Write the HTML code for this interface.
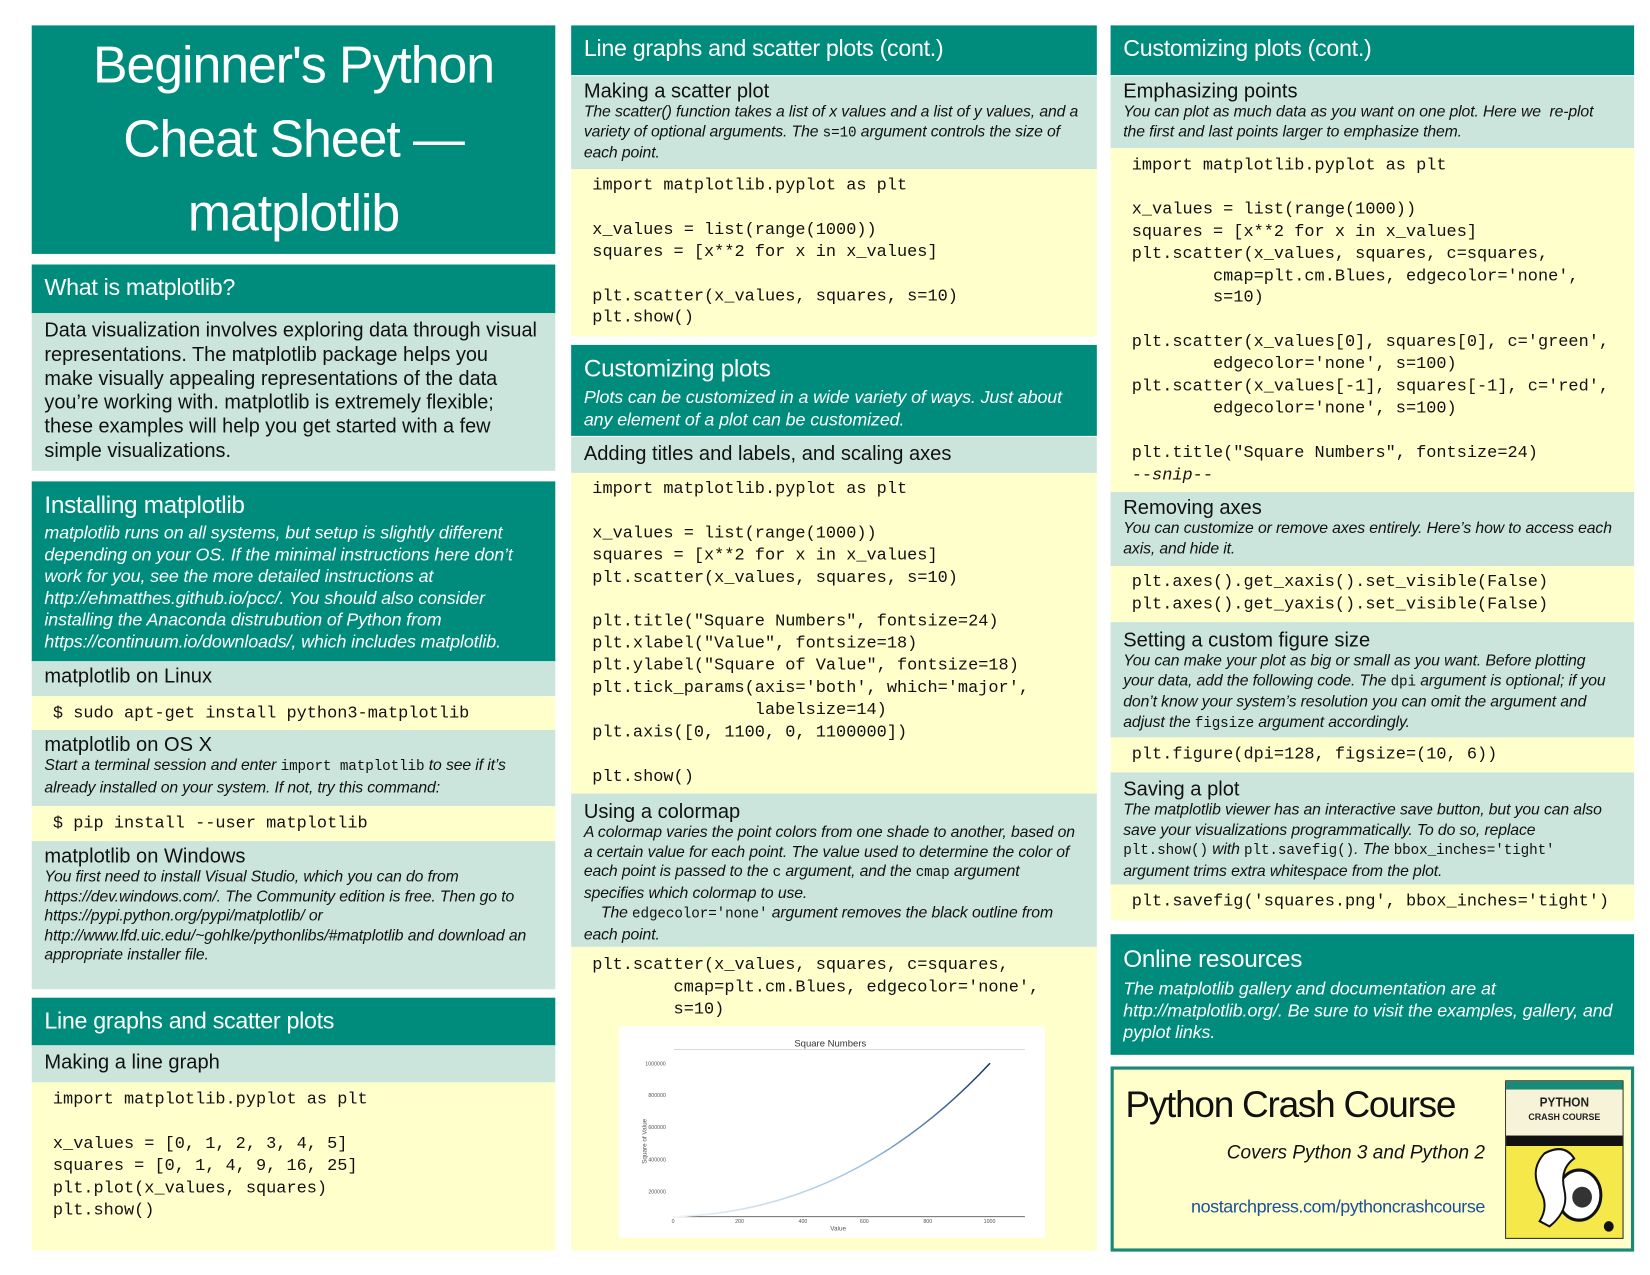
<!DOCTYPE html>
<html><head><meta charset="utf-8"><style>
html,body{margin:0;padding:0;background:#fff;}
body{width:1650px;height:1275px;overflow:hidden;position:relative;}
#w{position:absolute;left:0;top:0;width:1560px;height:1205px;transform:scale(1.0577,1.058);transform-origin:0 0;font-family:"Liberation Sans",Arial,sans-serif;color:#111;}
.b{position:absolute;box-sizing:border-box;padding:0 12px;overflow:hidden;}
.L{left:30px;width:495px}.M{left:540px;width:497px}.R{left:1050px;width:495px}
.t{background:#008c7d;color:#fff;}
.g{background:#cbe5dc;padding-right:16px}
.y{background:#ffffcc;}
.h{font-size:22px;letter-spacing:-0.3px;padding-top:9px;}
.s{font-size:19px;padding-top:5px;line-height:20px}
.i{font-style:italic;font-size:14.9px;line-height:18.6px;letter-spacing:-0.1px}
.ti{font-style:italic;font-size:16.9px;line-height:20.6px;letter-spacing:-0.1px;padding-right:6px}
pre{margin:0;font-family:"Liberation Mono","DejaVu Sans Mono",monospace;font-size:16px;line-height:20.9px;padding:6px 8px 0;}
code{font-family:"Liberation Mono",monospace;font-style:normal;font-size:13.5px}
</style></head><body><div id="w">

<!-- LEFT -->
<div class="b L t" style="top:24px;height:216px;text-align:center;font-size:49px;line-height:70px;padding-top:3px;letter-spacing:-1px">Beginner's Python<br>Cheat Sheet —<br>matplotlib</div>
<div class="b L t h" style="top:250px;height:46px">What is matplotlib?</div>
<div class="b L g" style="top:296px;height:149px;font-size:18.8px;line-height:22.8px;padding-top:5px;letter-spacing:0;padding-right:16px">Data visualization involves exploring data through visual representations. The matplotlib package helps you make visually appealing representations of the data you’re working with. matplotlib is extremely flexible; these examples will help you get started with a few simple visualizations.</div>
<div class="b L t" style="top:455px;height:170px"><div style="font-size:23px;padding-top:9px;letter-spacing:-0.3px">Installing matplotlib</div><div class="ti" style="padding-top:3px">matplotlib runs on all systems, but setup is slightly different depending on your OS. If the minimal instructions here don’t work for you, see the more detailed instructions at http://ehmatthes.github.io/pcc/. You should also consider installing the Anaconda distrubution of Python from https://continuum.io/downloads/, which includes matplotlib.</div></div>
<div class="b L g s" style="top:625px;height:33px">matplotlib on Linux</div>
<div class="b L y" style="top:658px;height:32px"><pre>$ sudo apt-get install python3-matplotlib</pre></div>
<div class="b L g" style="top:690px;height:72px"><div class="s" style="padding-top:5px">matplotlib on OS X</div><div class="i">Start a terminal session and enter <code>import matplotlib</code> to see if it’s already installed on your system. If not, try this command:</div></div>
<div class="b L y" style="top:762px;height:33px"><pre>$ pip install --user matplotlib</pre></div>
<div class="b L g" style="top:795px;height:140px"><div class="s">matplotlib on Windows</div><div class="i">You first need to install Visual Studio, which you can do from https://dev.windows.com/. The Community edition is free. Then go to https://pypi.python.org/pypi/matplotlib/ or http://www.lfd.uic.edu/~gohlke/pythonlibs/#matplotlib and download an appropriate installer file.</div></div>
<div class="b L t h" style="top:943px;height:45px">Line graphs and scatter plots</div>
<div class="b L g s" style="top:988px;height:35px;padding-top:7px">Making a line graph</div>
<div class="b L y" style="top:1023px;height:159px"><pre style="padding-top:6px">import matplotlib.pyplot as plt

x_values = [0, 1, 2, 3, 4, 5]
squares = [0, 1, 4, 9, 16, 25]
plt.plot(x_values, squares)
plt.show()</pre></div>

<!-- MIDDLE -->
<div class="b M t h" style="top:24px;height:47px">Line graphs and scatter plots (cont.)</div>
<div class="b M g" style="top:72px;height:88px"><div class="s">Making a scatter plot</div><div class="i">The scatter() function takes a list of x values and a list of y values, and a variety of optional arguments. The <code>s=10</code> argument controls the size of each point.</div></div>
<div class="b M y" style="top:160px;height:158px"><pre style="padding-top:5px">import matplotlib.pyplot as plt

x_values = list(range(1000))
squares = [x**2 for x in x_values]

plt.scatter(x_values, squares, s=10)
plt.show()</pre></div>
<div class="b M t" style="top:326px;height:86px"><div style="font-size:23px;padding-top:9px;letter-spacing:-0.3px">Customizing plots</div><div class="ti" style="padding-top:4px">Plots can be customized in a wide variety of ways. Just about any element of a plot can be customized.</div></div>
<div class="b M g s" style="top:413px;height:34px;padding-top:7px">Adding titles and labels, and scaling axes</div>
<div class="b M y" style="top:447px;height:303px"><pre style="padding-top:5px">import matplotlib.pyplot as plt

x_values = list(range(1000))
squares = [x**2 for x in x_values]
plt.scatter(x_values, squares, s=10)

plt.title("Square Numbers", fontsize=24)
plt.xlabel("Value", fontsize=18)
plt.ylabel("Square of Value", fontsize=18)
plt.tick_params(axis='both', which='major',
                labelsize=14)
plt.axis([0, 1100, 0, 1100000])

plt.show()</pre></div>
<div class="b M g" style="top:750px;height:145px"><div class="s" style="padding-top:8px">Using a colormap</div><div class="i">A colormap varies the point colors from one shade to another, based on a certain value for each point. The value used to determine the color of each point is passed to the <code>c</code> argument, and the <code>cmap</code> argument specifies which colormap to use.<br>&nbsp;&nbsp;&nbsp;&nbsp;The <code>edgecolor='none'</code> argument removes the black outline from each point.</div></div>
<div class="b M y" style="top:895px;height:287px"><pre style="padding-top:7px">plt.scatter(x_values, squares, c=squares,
        cmap=plt.cm.Blues, edgecolor='none',
        s=10)</pre></div>
<svg style="position:absolute;left:585px;top:970px" width="403" height="200" viewBox="0 0 403 200">
<rect width="403" height="200" fill="#fff"/>
<text x="200" y="19" font-size="9" text-anchor="middle" font-family="Liberation Sans" fill="#333">Square Numbers</text>
<line x1="52" y1="22" x2="384" y2="22" stroke="#ccc" stroke-width="0.7"/>
<line x1="52" y1="180" x2="384" y2="180" stroke="#555" stroke-width="0.8"/>
<g font-size="5" fill="#555" font-family="Liberation Sans">
<text x="25" y="37">1000000</text><text x="28" y="67">800000</text><text x="28" y="97">600000</text><text x="28" y="128">400000</text><text x="28" y="158">200000</text>
<text x="50" y="186">0</text><text x="110" y="186">200</text><text x="170" y="186">400</text><text x="228" y="186">600</text><text x="288" y="186">800</text><text x="345" y="186">1000</text>
<text x="200" y="193" font-size="6">Value</text>
<text x="0" y="0" transform="translate(26,130) rotate(-90)" font-size="6">Square of Value</text>
</g>
<defs><linearGradient id="gr" x1="0" x2="1"><stop offset="0" stop-color="#f0f4f8"/><stop offset="0.6" stop-color="#9cc3e0"/><stop offset="1" stop-color="#08306b"/></linearGradient></defs>
<path d="M52 180 Q220 175 351 35" fill="none" stroke="url(#gr)" stroke-width="1.4"/>
</svg>

<!-- RIGHT -->
<div class="b R t h" style="top:24px;height:47px">Customizing plots (cont.)</div>
<div class="b R g" style="top:72px;height:68px"><div class="s">Emphasizing points</div><div class="i">You can plot as much data as you want on one plot. Here we&nbsp; re-plot the first and last points larger to emphasize them.</div></div>
<div class="b R y" style="top:140px;height:325px"><pre style="padding-top:6px">import matplotlib.pyplot as plt

x_values = list(range(1000))
squares = [x**2 for x in x_values]
plt.scatter(x_values, squares, c=squares,
        cmap=plt.cm.Blues, edgecolor='none',
        s=10)

plt.scatter(x_values[0], squares[0], c='green',
        edgecolor='none', s=100)
plt.scatter(x_values[-1], squares[-1], c='red',
        edgecolor='none', s=100)

plt.title("Square Numbers", fontsize=24)
--<i>snip</i>--</pre></div>
<div class="b R g" style="top:465px;height:70px"><div class="s" style="padding-top:6px">Removing axes</div><div class="i">You can customize or remove axes entirely. Here’s how to access each axis, and hide it.</div></div>
<div class="b R y" style="top:535px;height:53px"><pre style="padding-top:5px">plt.axes().get_xaxis().set_visible(False)
plt.axes().get_yaxis().set_visible(False)</pre></div>
<div class="b R g" style="top:588px;height:109px"><div class="s" style="padding-top:8px">Setting a custom figure size</div><div class="i">You can make your plot as big or small as you want. Before plotting your data, add the following code. The <code>dpi</code> argument is optional; if you don’t know your system’s resolution you can omit the argument and adjust the <code>figsize</code> argument accordingly.</div></div>
<div class="b R y" style="top:697px;height:33px"><pre style="padding-top:6px">plt.figure(dpi=128, figsize=(10, 6))</pre></div>
<div class="b R g" style="top:730px;height:106px"><div class="s" style="padding-top:7px">Saving a plot</div><div class="i">The matplotlib viewer has an interactive save button, but you can also save your visualizations programmatically. To do so, replace <code>plt.show()</code> with <code>plt.savefig()</code>. The <code>bbox_inches='tight'</code> argument trims extra whitespace from the plot.</div></div>
<div class="b R y" style="top:836px;height:34px"><pre style="padding-top:6px">plt.savefig('squares.png', bbox_inches='tight')</pre></div>
<div class="b R t" style="top:883px;height:114px"><div style="font-size:23px;padding-top:10px;letter-spacing:-0.3px">Online resources</div><div class="ti" style="padding-top:5px">The matplotlib gallery and documentation are at http://matplotlib.org/. Be sure to visit the examples, gallery, and pyplot links.</div></div>
<div class="b R y" style="top:1008px;height:175px;border:3px solid #1a8a78;padding:0">
 <div style="position:absolute;left:11px;top:14px;font-size:35px;letter-spacing:-1.2px;color:#111">Python Crash Course</div>
 <div style="position:absolute;right:138px;top:68px;font-size:18px;font-style:italic;color:#111">Covers Python 3 and Python 2</div>
 <div style="position:absolute;right:138px;top:120px;font-size:17px;color:#1a4f9a;letter-spacing:-0.4px">nostarchpress.com/pythoncrashcourse</div>
 <svg style="position:absolute;left:370px;top:10px" width="112" height="150" viewBox="0 0 120 152" preserveAspectRatio="none">
  <rect x="0.5" y="0.5" width="119" height="151" fill="#f5e84a" stroke="#111"/>
  <rect x="1" y="1" width="118" height="8" fill="#1a8a78"/>
  <rect x="1" y="9" width="118" height="44" fill="#f7f3d8"/>
  <rect x="1" y="53" width="118" height="10" fill="#111"/>
  <text x="60" y="25" font-size="12" font-weight="bold" text-anchor="middle" font-family="Liberation Sans" fill="#222">PYTHON</text>
  <text x="60" y="38" font-size="9" font-weight="bold" text-anchor="middle" font-family="Liberation Sans" fill="#222">CRASH COURSE</text>
  <ellipse cx="75" cy="110" rx="22" ry="24" fill="#fff" stroke="#111" stroke-width="3"/>
  <circle cx="78" cy="112" r="10" fill="#333"/>
  <path d="M40 70 q20 -10 30 5 q-15 10 -10 30 q5 20 -15 35 l-10 -5 q10 -15 0 -30 q-10 -20 5 -35z" fill="#fff" stroke="#111" stroke-width="2"/>
  <circle cx="105" cy="140" r="5" fill="#111"/>
 </svg>
</div>

</div></body></html>
